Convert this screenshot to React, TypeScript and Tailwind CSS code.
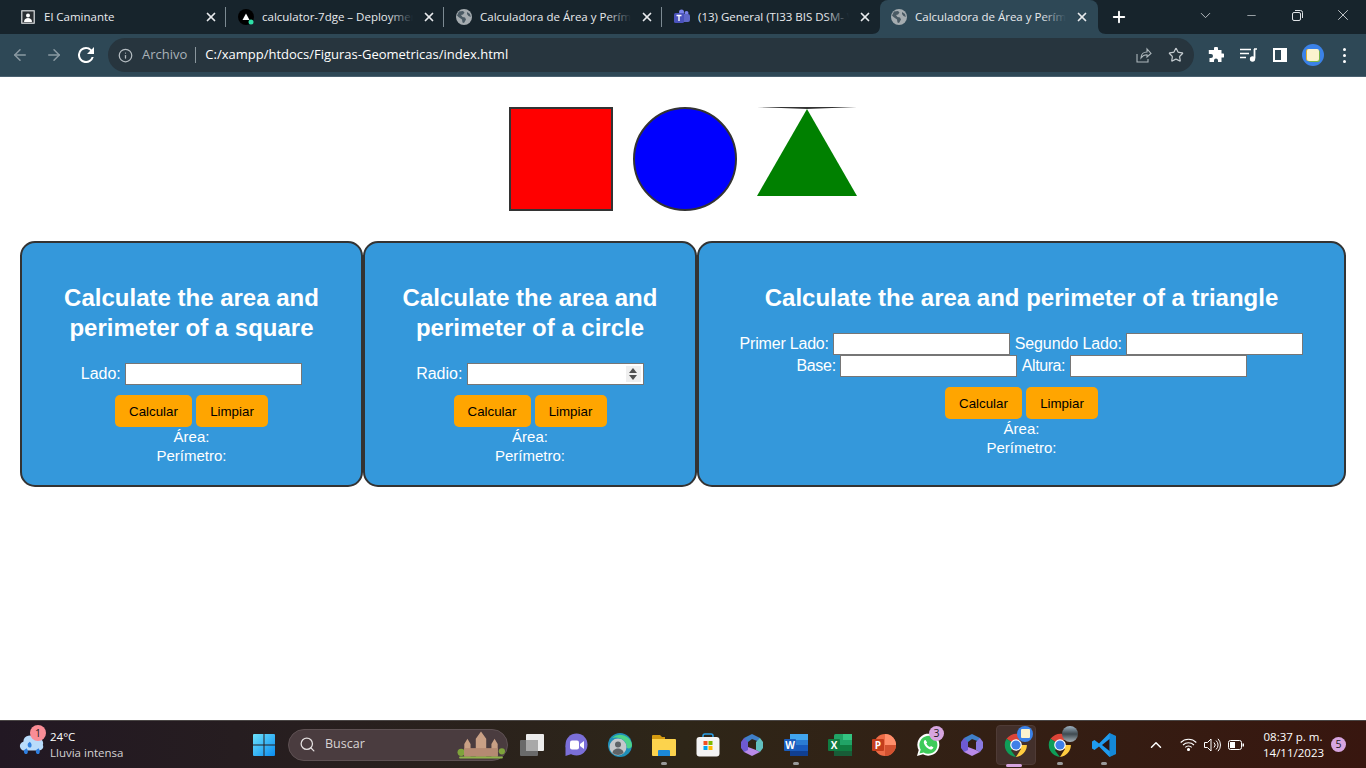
import { ArrowLeft, ArrowRight, ChevronDown, ChevronUp, Info, Minus, Plus, Search, Star, X } from 'lucide-react';

const Globe = () => (
  <svg width="16" height="16" viewBox="0 0 16 16">
    <circle cx="8" cy="8" r="8" fill="#a5acb0" />
    <path d="M3 2.500 7 2l1.500 1.500L7 5.500 5 6 6.500 8 9 8.500 10 10.500 8 14 6.500 13.500 6 10.500 2.500 8 1 6.500ZM11 3l3 2 .8 3-2.300-1-1.500-2Z" fill="#4a5a64" />
  </svg>
);

const tabs = [
  {
    title: 'El Caminante',
    icon: (
      <svg width="16" height="16" viewBox="0 0 16 16">
        <rect x="1" y="1" width="14" height="14" rx="1" fill="#b8bcbf" />
        <rect x="2.500" y="2.500" width="11" height="11" fill="#2a2f33" />
        <circle cx="8" cy="6.500" r="2" fill="#fff" />
        <path d="M4 13c0-3 2-4 4-4s4 1 4 4Z" fill="#fff" />
      </svg>
    ),
    sep: true,
  },
  {
    title: 'calculator-7dge – Deployment',
    icon: (
      <svg width="16" height="16" viewBox="0 0 16 16">
        <circle cx="8" cy="8" r="8" fill="#000" />
        <path d="M8 4.500 11.500 11h-7Z" fill="#fff" />
        <circle cx="13" cy="13" r="2.500" fill="#2ee0a8" />
      </svg>
    ),
    sep: true,
  },
  { title: 'Calculadora de Área y Perímetro', icon: <Globe />, sep: true },
  {
    title: '(13) General (TI33 BIS DSM- Virtual',
    icon: (
      <svg width="16" height="16" viewBox="0 0 16 16">
        <circle cx="12.500" cy="4" r="2" fill="#7b83eb" />
        <circle cx="7.500" cy="3" r="2.500" fill="#7b83eb" />
        <rect x="6" y="5" width="10" height="8" rx="2" fill="#6068c8" />
        <rect x="0" y="4" width="10" height="10" rx="1.500" fill="#4b53bc" />
        <path d="M2.500 6.500h5M5 6.500V12" stroke="#fff" strokeWidth="1.400" />
      </svg>
    ),
    sep: false,
  },
];

function Tab({ title, icon, sep }: { title: string; icon: React.ReactNode; sep: boolean }) {
  return (
    <div className="w-[218px] h-[34px] shrink-0 flex items-center pl-[12px] pr-[7px] gap-[8px] relative">
      {icon}
      <div className="relative flex-1 overflow-hidden whitespace-nowrap text-[11.500px] text-[#e8eaed]">
        {title}
        <div className="absolute right-0 top-0 bottom-0 w-[24px] bg-gradient-to-r from-transparent to-[#17242c]" />
      </div>
      <X size={14} strokeWidth={3} className="text-[#e8eaed] mx-[1px]" />
      {sep && <div className="absolute right-0 top-[7px] h-[20px] w-px bg-[#7c8a92]" />}
    </div>
  );
}

function ActiveTab() {
  return (
    <div className="w-[218px] h-[34px] shrink-0 flex items-center pl-[11px] pr-[8px] gap-[8px] relative bg-[#2e4856] rounded-t-[8px]">
      <Globe />
      <div className="relative flex-1 overflow-hidden whitespace-nowrap text-[11.500px] text-[#e8eaed]">
        Calculadora de Área y Perímetro
        <div className="absolute right-0 top-0 bottom-0 w-[24px] bg-gradient-to-r from-transparent to-[#2e4856]" />
      </div>
      <X size={14} strokeWidth={3} className="text-[#e8eaed] mx-[1px]" />
      <svg width="8" height="8" viewBox="0 0 8 8" className="absolute -left-[8px] bottom-0">
        <path d="M8 0v8H0c5 0 8-3 8-8Z" fill="#2e4856" />
      </svg>
      <svg width="8" height="8" viewBox="0 0 8 8" className="absolute -right-[8px] bottom-0">
        <path d="M0 0v8h8C3 8 0 5 0 0Z" fill="#2e4856" />
      </svg>
    </div>
  );
}

function BrowserChrome() {
  return (
    <header className="shrink-0 font-['Open_Sans',sans-serif]">
      <div className="h-[34px] bg-[#17242c] flex pl-[8px] relative">
        {tabs.map((t) => (
          <Tab key={t.title} title={t.title} icon={t.icon} sep={t.sep} />
        ))}
        <ActiveTab />
        <div className="w-[42px] flex items-center justify-center">
          <Plus size={18} strokeWidth={2.500} className="text-white" />
        </div>
        <div className="flex-1" />
        <div className="flex items-center text-[#dfe3e6] -mt-[4px]">
          <div className="w-[46px] flex justify-center"><ChevronDown size={17} strokeWidth={1.100} /></div>
          <div className="w-[46px] flex justify-center"><Minus size={13} strokeWidth={1.200} /></div>
          <div className="w-[46px] flex justify-center">
            <svg width="11" height="11" viewBox="0 0 11 11" fill="none" stroke="currentColor">
              <rect x="0.500" y="2.500" width="8" height="8" rx="1.500" />
              <path d="M3 .5h5.500a2 2 0 0 1 2 2V8" />
            </svg>
          </div>
          <div className="w-[46px] flex justify-center"><X size={18} strokeWidth={1.100} /></div>
        </div>
      </div>
      <div className="h-[43px] bg-[#2e4856] border-b border-[#4a6170] flex items-center">
        <div className="w-[40px] flex justify-center"><ArrowLeft size={18} className="text-[#8b9aa3]" /></div>
        <div className="w-[28px] flex justify-center"><ArrowRight size={18} className="text-[#8b9aa3]" /></div>
        <div className="w-[36px] flex justify-center">
          <svg width="16" height="16" viewBox="0 0 16 16" fill="#fff">
            <path d="M13.600 2.400A7.950 7.950 0 0 0 8 0a8 8 0 1 0 7.730 10h-2.080A6 6 0 1 1 8 2c1.660 0 3.140.69 4.220 1.780L9 7h7V0Z" />
          </svg>
        </div>
        <div className="ml-[4px] w-[1086px] h-[34px] rounded-full bg-[#27353e] flex items-center px-[10px] text-[13px]">
          <Info size={15} className="text-[#b4bcc1]" />
          <span className="ml-[9px] text-[#a9b2b8]">Archivo</span>
          <span className="ml-[8px] mr-[9px] w-px h-[16px] bg-[#8a969d]" />
          <span className="text-white flex-1">C:/xampp/htdocs/Figuras-Geometricas/index.html</span>
          <svg width="16" height="16" viewBox="0 0 16 16" fill="none" stroke="#aeb7bc" strokeWidth="1.100" className="mr-[16px]">
            <path d="M1 7v8h11v-3M5 11c0-4 3-6 6-6V2l4 4.500L11 10V7.800C8.500 7.800 6.500 8.800 5 11Z" />
          </svg>
          <Star size={16} strokeWidth={1.800} className="text-[#c4cbcf]" />
        </div>
        <div className="w-[44px] flex justify-center">
          <svg width="16" height="16" viewBox="0 0 16 16" fill="#fff">
            <path d="M6 1.500a2 2 0 0 1 4 0V3h3.500v3.500H15a2 2 0 0 1 0 4h-1.500V15H10v-1.500a2 2 0 0 0-4 0V15H1.500v-4H3a2 2 0 0 0 0-4H.8V3H6Z" />
          </svg>
        </div>
        <div className="w-[20px] flex justify-center">
          <svg width="17" height="14" viewBox="0 0 17 14" fill="none" stroke="#fff" strokeWidth="1.300">
            <path d="M0 1.500h11M0 5.500h9M0 9.500h6" />
            <path d="M14.500 1v9.500" strokeWidth="1.800" />
            <circle cx="12.500" cy="11" r="2" fill="#fff" />
            <path d="M14 1h3" strokeWidth="1.500" />
          </svg>
        </div>
        <div className="w-[44px] flex justify-center">
          <div className="w-[14px] h-[14px] border-2 border-white flex justify-end"><div className="w-[4px] bg-white" /></div>
        </div>
        <div className="w-[22px] h-[22px] rounded-full bg-[#3b82e8] flex items-center justify-center">
          <div className="w-[12px] h-[12px] rounded-[2px] bg-[#fbf3cf] shadow-[1px_1px_0_#7ab648,-1px_0_0_#e0b030]" />
        </div>
        <div className="ml-[19px] flex flex-col gap-[3px]">
          <span className="w-[3px] h-[3px] rounded-full bg-white" />
          <span className="w-[3px] h-[3px] rounded-full bg-white" />
          <span className="w-[3px] h-[3px] rounded-full bg-white" />
        </div>
      </div>
    </header>
  );
}

const textInput = 'inline-block w-[177px] h-[22px] bg-white border border-[#767676] align-baseline';

function Actions() {
  return (
    <div className="mt-[10px] h-[32px] flex justify-center gap-[4px]">
      <button className="w-[77px] h-[32px] pt-px rounded-[5px] bg-[#ffa500] text-[13.330px] text-black">Calcular</button>
      <button className="w-[72px] h-[32px] pt-px rounded-[5px] bg-[#ffa500] text-[13.330px] text-black">Limpiar</button>
    </div>
  );
}

function Results() {
  return (
    <div className="leading-[19px] text-[15px]">
      <div>Área:</div>
      <div>Perímetro:</div>
    </div>
  );
}

function Card({ width, title, children }: { width: string; title: string; children: React.ReactNode }) {
  return (
    <section className={`${width} shrink-0 h-[246px] bg-[#3498db] border-2 border-[#333] rounded-[15px] px-[20px] pt-[40px] text-center text-white text-[16px]`}>
      <h2 className="text-[24px] leading-[30px] font-bold mb-[20px]">{title}</h2>
      {children}
    </section>
  );
}

function Page() {
  return (
    <main className="flex-1 bg-white font-['Liberation_Sans',Arial,sans-serif]">
      <div className="flex justify-center items-start gap-[20px] pt-[30px] h-[134px]">
        <div className="w-[104px] h-[104px] bg-[#ff0000] border-2 border-[#333]" />
        <div className="w-[104px] h-[104px] bg-[#0000ff] border-2 border-[#333] rounded-full" />
        <div className="w-0 h-0 border-t-2 border-t-[#333] border-x-[50px] border-x-transparent border-b-[87px] border-b-[#008000]" />
      </div>
      <div className="flex pl-[20px] mt-[30px]">
        <Card width="w-[343px]" title="Calculate the area and perimeter of a square">
          <div className="h-[22px] leading-[20px]">
            <label>Lado:</label> <input className={textInput} />
          </div>
          <Actions />
          <Results />
        </Card>
        <Card width="w-[334px]" title="Calculate the area and perimeter of a circle">
          <div className="h-[22px] leading-[20px]">
            <label>Radio:</label>{' '}
            <span className="relative inline-block align-baseline">
              <input className={textInput} />
              <span className="absolute right-[3px] top-[3px] w-[15px] h-[16px] bg-[#efefef] flex flex-col items-center justify-center gap-[2px]">
                <span className="w-0 h-0 border-x-[4px] border-x-transparent border-b-[5px] border-b-[#505050]" />
                <span className="w-0 h-0 border-x-[4px] border-x-transparent border-t-[5px] border-t-[#505050]" />
              </span>
            </span>
          </div>
          <Actions />
          <Results />
        </Card>
        <Card width="w-[649px]" title="Calculate the area and perimeter of a triangle">
          <div className="h-[22px] leading-[20px]">
            <label className="tracking-[-0.2px]">Primer Lado:</label> <input className={textInput} />{' '}
            <label className="tracking-[-0.1px]">Segundo Lado:</label> <input className={textInput} />
          </div>
          <div className="h-[22px] leading-[20px]">
            <label className="tracking-[-0.3px]">Base:</label> <input className={textInput} />{' '}
            <label className="tracking-[-0.4px]">Altura:</label> <input className={textInput} />
          </div>
          <Actions />
          <Results />
        </Card>
      </div>
    </main>
  );
}

function Slot({ children, mark }: { children: React.ReactNode; mark?: boolean }) {
  return (
    <div className="w-[44px] h-[48px] shrink-0 flex items-center justify-center relative">
      {children}
      {mark && <span className="absolute bottom-[4px] w-[6px] h-[3px] rounded-full bg-[#9a9a9a]" />}
    </div>
  );
}

function ChromeIcon({ size = 24 }: { size?: number }) {
  return (
    <svg width={size} height={size} viewBox="0 0 24 24">
      <path d="M12 12 2.500 5.800A12 12 0 0 1 22.900 7H12Z" fill="#db4437" />
      <path d="M12 12 7 17.500 12 24A12 12 0 0 1 2.500 5.800Z" fill="#0f9d58" />
      <path d="M12 12h10.900A12 12 0 0 1 12 24l5-8Z" fill="#ffcd40" />
      <circle cx="12" cy="12" r="5.800" fill="#fff" />
      <circle cx="12" cy="12" r="4.600" fill="#3f7fe8" />
    </svg>
  );
}

function Taskbar() {
  return (
    <footer className="shrink-0 h-[48px] border-t border-[#4a4645] bg-gradient-to-r from-[#221823] via-[#2e2618] via-50% to-[#38160f] flex items-center font-['Open_Sans',sans-serif] text-white">
      <div className="w-[250px] pl-[19px] flex items-center shrink-0 relative">
        <svg width="26" height="26" viewBox="0 0 24 24">
          <path d="M1 14a4 4 0 0 1 3-5 6 6 0 0 1 11-3 5 5 0 0 1 7 6 3.500 3.500 0 0 1-3 5H6a4.500 4.500 0 0 1-5-3Z" fill="#b9dcfb" />
          <path d="M10 9c2 2 2 4 1 5s-3 0-3-2 1-2 2-3ZM7 15c1.500 2 1.500 4 .5 5s-3 0-3-2 1.500-2 2.500-3ZM18 15c1.500 2 1.500 4 .5 5s-3 0-3-2 1.500-2 2.500-3Z" fill="#2f7fe0" />
        </svg>
        <span className="absolute left-[30px] -top-[4px] w-[16px] h-[16px] rounded-full bg-[#f98d96] text-[#231a1c] text-[10.500px] leading-[16px] text-center">1</span>
        <div className="ml-[5px] text-[11.500px] leading-[16px]">
          <div className="font-medium">24°C</div>
          <div className="text-[#d5d2d3]">Lluvia intensa</div>
        </div>
      </div>
      <div className="w-[28px] shrink-0 flex justify-center">
        <svg width="24" height="24" viewBox="0 0 24 24">
          <defs>
            <linearGradient id="win" x1="0" y1="0" x2="1" y2="1">
              <stop offset="0" stopColor="#6ce2fb" />
              <stop offset="1" stopColor="#0a8cf0" />
            </linearGradient>
          </defs>
          <path d="M1 2a1 1 0 0 1 1-1h9.500v10.500H1ZM12.500 1H22a1 1 0 0 1 1 1v9.500H12.500ZM1 12.500h10.500V23H2a1 1 0 0 1-1-1ZM12.500 12.500H23V22a1 1 0 0 1-1 1h-9.500Z" fill="url(#win)" />
        </svg>
      </div>
      <div className="ml-[10px] w-[220px] h-[32px] shrink-0 rounded-full bg-[#4a3c3f] border border-[#5e5153] flex items-center pl-[10px] pr-[8px] relative">
        <Search size={17} className="text-[#e4e0e0]" strokeWidth={1.800} />
        <span className="ml-[9px] text-[12.500px] text-[#d8d4d4]">Buscar</span>
        <svg width="48" height="28" viewBox="0 0 46 26" className="absolute right-[2px] bottom-[1px]">
          <circle cx="4" cy="20" r="3.500" fill="#7fa33b" />
          <circle cx="43" cy="19" r="3" fill="#7fa33b" />
          <path d="M7 24V12l3-5 3 5v12ZM18 24V7l5-7 5 7v17ZM33 24V12l3-5 3 5v12Z" fill="#c9a085" />
          <rect x="7" y="16" width="32" height="8" fill="#b58a72" />
          <rect x="2" y="24" width="42" height="2" rx="1" fill="#8fb44a" />
        </svg>
      </div>
      <div className="ml-[2px] flex">
        <Slot>
          <svg width="24" height="24" viewBox="0 0 24 24">
            <rect x="6" y="1" width="18" height="17" rx="1" fill="#ececec" />
            <rect x="0" y="7" width="18" height="16" rx="1" fill="#6a6a6a" />
            <rect x="6" y="7" width="12" height="11" fill="#a8a8a8" />
          </svg>
        </Slot>
        <Slot>
          <svg width="24" height="24" viewBox="0 0 24 24">
            <circle cx="12.500" cy="11.500" r="11" fill="#7b6fd8" />
            <path d="M1.500 12v11l6-2Z" fill="#7b6fd8" />
            <rect x="6" y="7.500" width="9" height="9" rx="2" fill="#fff" />
            <path d="m16 11 4-3v8l-4-3Z" fill="#fff" />
          </svg>
        </Slot>
        <Slot>
          <svg width="24" height="24" viewBox="0 0 24 24">
            <circle cx="12" cy="12" r="12" fill="#1f8fb8" />
            <path d="M4 5a12 12 0 0 1 20 7c0 3-3 4-5 3 0-8-8-12-15-10Z" fill="#4dd38a" />
            <circle cx="10" cy="14" r="8.500" fill="#c5c8cb" />
            <circle cx="10" cy="11.500" r="3" fill="#5f6468" />
            <path d="M4.500 20c0-3 3-4.500 5.500-4.500s5.500 1.500 5.500 4.500a8.500 8.500 0 0 1-11 0Z" fill="#5f6468" />
          </svg>
        </Slot>
        <Slot mark>
          <svg width="24" height="22" viewBox="0 0 24 22">
            <path d="M0 2a1 1 0 0 1 1-1h7l2 2h3v4H0Z" fill="#d39a10" />
            <path d="M0 5h23a1 1 0 0 1 1 1v15a1 1 0 0 1-1 1H1a1 1 0 0 1-1-1Z" fill="#fcd34d" />
            <path d="M7 16h10a1 1 0 0 1 1 1v5H6v-5a1 1 0 0 1 1-1Z" fill="#1c89d8" />
          </svg>
        </Slot>
        <Slot>
          <svg width="24" height="24" viewBox="0 0 24 24">
            <path d="M7 5V3a2 2 0 0 1 2-2h6a2 2 0 0 1 2 2v2" fill="none" stroke="#2aa0e8" strokeWidth="1.500" />
            <rect x="0.500" y="4" width="23" height="19.500" rx="3" fill="#f4f4f4" />
            <rect x="7.500" y="8" width="4" height="4" fill="#f25022" />
            <rect x="12.500" y="8" width="4" height="4" fill="#7fba00" />
            <rect x="7.500" y="13" width="4" height="4" fill="#00a4ef" />
            <rect x="12.500" y="13" width="4" height="4" fill="#ffb900" />
          </svg>
        </Slot>
        <Slot>
          <svg width="22" height="22" viewBox="0 0 22 22">
            <path d="M3 4 11 0l8 4v4l-8-3-4 3v6Z" fill="#3f7fc9" />
            <path d="M19 4l3 4v6l-3 4-4-2V8Z" fill="#62c0c0" />
            <path d="M3 14l4-1 8 3 4 2-8 4-8-4Z" fill="#b98ae8" />
            <path d="M3 4 0 8v6l3 4 4-2V8Z" fill="#6e5ad2" />
          </svg>
        </Slot>
        <Slot mark>
          <svg width="24" height="24" viewBox="0 0 24 24">
            <rect x="6" y="1" width="18" height="22" rx="1.500" fill="#2b7cd3" />
            <rect x="6" y="1" width="18" height="6" fill="#41a5ee" />
            <rect x="6" y="12" width="18" height="6" fill="#185abd" />
            <rect x="6" y="18" width="18" height="5" fill="#103f91" />
            <rect x="0" y="6" width="12" height="12" rx="1" fill="#1a5dbd" />
            <text x="6" y="15.500" textAnchor="middle" fontSize="10" fontWeight="700" fill="#fff" fontFamily="Open Sans">W</text>
          </svg>
        </Slot>
        <Slot>
          <svg width="24" height="24" viewBox="0 0 24 24">
            <rect x="6" y="1" width="18" height="22" rx="1.500" fill="#21a366" />
            <rect x="15" y="1" width="9" height="6" fill="#33c481" />
            <rect x="6" y="12" width="18" height="6" fill="#107c41" />
            <rect x="6" y="18" width="18" height="5" fill="#185c37" />
            <rect x="0" y="6" width="12" height="12" rx="1" fill="#107c41" />
            <text x="6" y="15.500" textAnchor="middle" fontSize="10" fontWeight="700" fill="#fff" fontFamily="Open Sans">X</text>
          </svg>
        </Slot>
        <Slot>
          <svg width="24" height="24" viewBox="0 0 24 24">
            <circle cx="13" cy="12" r="11" fill="#ed6c47" />
            <path d="M13 1a11 11 0 0 1 11 11H13Z" fill="#ff8f6b" />
            <path d="M13 12h11a11 11 0 0 1-11 11Z" fill="#d35230" />
            <rect x="0" y="6" width="12" height="12" rx="1" fill="#c43e1c" />
            <text x="6" y="15.500" textAnchor="middle" fontSize="10" fontWeight="700" fill="#fff" fontFamily="Open Sans">P</text>
          </svg>
        </Slot>
        <Slot>
          <svg width="24" height="24" viewBox="0 0 24 24">
            <path d="M1 23 2.700 17A11 11 0 1 1 7 21.300Z" fill="#fff" />
            <path d="M3.500 20.500 4.700 16.500a9 9 0 1 1 3 3Z" fill="#3ecb5a" />
            <path d="M9 7c-1 .5-1.500 2-1 3.500 1 3 3.500 5 6 6 1.500.3 3-.5 3.500-2l-2.500-1.500-1 1c-1.500-.5-3-2-3.800-3.500l1-1L9.500 7Z" fill="#fff" />
          </svg>
          <span className="absolute left-[23px] top-[5px] w-[15px] h-[15px] rounded-full bg-[#d7a5e0] text-[#231a1c] text-[10.500px] leading-[15px] text-center">3</span>
        </Slot>
        <Slot>
          <svg width="22" height="22" viewBox="0 0 22 22">
            <path d="M3 4 11 0l8 4v4l-8-3-4 3v6Z" fill="#3f7fc9" />
            <path d="M19 4l3 4v6l-3 4-4-2V8Z" fill="#8a7ae0" />
            <path d="M3 14l4-1 8 3 4 2-8 4-8-4Z" fill="#b98ae8" />
            <path d="M3 4 0 8v6l3 4 4-2V8Z" fill="#6e5ad2" />
          </svg>
        </Slot>
        <Slot>
          <span className="absolute left-[2px] top-[4px] w-[40px] h-[40px] rounded-[4px] bg-[#43302b] border border-[#4f3b36]" />
          <span className="relative"><ChromeIcon /></span>
          <span className="absolute left-[23px] top-[5px] w-[16px] h-[16px] rounded-full bg-[#3b82e8] flex items-center justify-center">
            <span className="w-[9px] h-[9px] bg-[#fbf3cf] rounded-[1px]" />
          </span>
          <span className="absolute bottom-[2px] left-[12px] w-[16px] h-[3px] rounded-full bg-[#d7a5e0]" />
        </Slot>
        <Slot mark>
          <ChromeIcon />
          <span className="absolute left-[24px] top-[5px] w-[16px] h-[16px] rounded-full bg-gradient-to-b from-[#9fb4c4] via-[#3f4a50] to-[#a8b3ba]" />
        </Slot>
        <Slot mark>
          <svg width="24" height="24" viewBox="0 0 24 24">
            <path d="M17.500 0 24 3v18l-6.500 3L7 13.500 2.500 17 0 15.500V8.500L2.500 7 7 10.500Z" fill="#1f9cf0" />
            <path d="M17.500 6 10 12l7.500 6Z" fill="#2a1614" />
            <path d="M17.500 0 24 3v18l-6.500 3Z" fill="#0065a9" opacity=".35" />
          </svg>
        </Slot>
      </div>
      <div className="ml-[21px] flex items-center shrink-0">
        <ChevronUp size={18} strokeWidth={2} className="text-white" />
        <svg width="17" height="13" viewBox="0 0 17 13" fill="none" stroke="#fff" strokeWidth="1.100" className="ml-[15px]">
          <path d="M.7 4.500a11 11 0 0 1 15.600 0M3 7a8 8 0 0 1 11 0M5.300 9.300a4.500 4.500 0 0 1 6.400 0" />
          <circle cx="8.500" cy="11.500" r="1" fill="#fff" />
        </svg>
        <svg width="17" height="14" viewBox="0 0 17 14" fill="none" stroke="#fff" strokeWidth="1" className="ml-[7px]">
          <path d="M.5 4.500h3L7 1v12L3.500 9.500h-3ZM10 4.500a3.500 3.500 0 0 1 0 5M12 2.500a6 6 0 0 1 0 9M14 .8a9 9 0 0 1 0 12.400" />
        </svg>
        <svg width="16" height="10" viewBox="0 0 16 10" className="ml-[7px]">
          <rect x="0.500" y="0.500" width="13" height="9" rx="2" fill="none" stroke="#fff" />
          <rect x="2" y="2" width="5" height="6" fill="#fff" />
          <rect x="14.500" y="3.500" width="1.500" height="3" fill="#fff" />
        </svg>
      </div>
      <div className="ml-[19px] w-[60px] text-center text-[11.500px] leading-[16px] shrink-0 whitespace-nowrap">
        <div>08:37 p. m.</div>
        <div>14/11/2023</div>
      </div>
      <span className="ml-[8px] w-[15px] h-[15px] rounded-full bg-[#d7a5e0] text-[#231a1c] text-[10.500px] leading-[15px] text-center shrink-0">5</span>
    </footer>
  );
}

export default function App() {
  return (
    <div className="w-[1366px] h-[768px] flex flex-col overflow-hidden">
      <BrowserChrome />
      <Page />
      <Taskbar />
    </div>
  );
}
